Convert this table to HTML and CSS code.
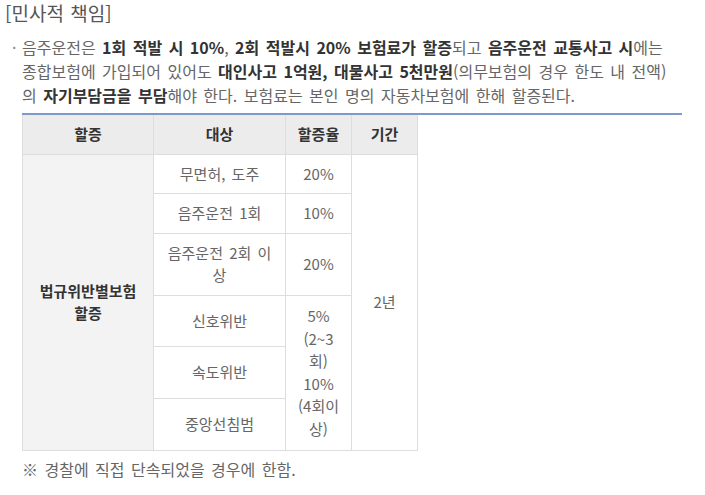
FILE: index.html
```html
<!DOCTYPE html>
<html lang="ko">
<head>
<meta charset="utf-8">
<link rel="stylesheet" href="styles.css">
</head>
<body>
<h3 class="title">[민사적 책임]</h3>
<p class="desc"><span class="dot">·</span>음주운전은 <b>1회 적발 시 10%</b>, <b>2회 적발시 20% 보험료가 할증</b>되고 <b>음주운전 교통사고 시</b>에는 종합보험에 가입되어 있어도 <b>대인사고 1억원, 대물사고 5천만원</b>(의무보험의 경우 한도 내 전액) 의 <b>자기부담금을 부담</b>해야 한다. 보험료는 본인 명의 자동차보험에 한해 할증된다.</p>
<div class="tbl-wrap">
  <table class="tbl">
    <colgroup>
      <col class="c1"><col class="c2"><col class="c3"><col class="c4">
    </colgroup>
    <thead>
      <tr><th>할증</th><th>대상</th><th>할증율</th><th>기간</th></tr>
    </thead>
    <tbody>
      <tr>
        <th class="side" rowspan="6">법규위반별보험 할증</th>
        <td>무면허, 도주</td>
        <td>20%</td>
        <td rowspan="6">2년</td>
      </tr>
      <tr><td>음주운전 1회</td><td>10%</td></tr>
      <tr><td>음주운전 2회 이상</td><td>20%</td></tr>
      <tr><td>신호위반</td><td class="rate" rowspan="3">5%<br>(2~3회)<br>10%<br>(4회이상)</td></tr>
      <tr><td>속도위반</td></tr>
      <tr><td>중앙선침범</td></tr>
    </tbody>
  </table>
</div>
<p class="note">※ 경찰에 직접 단속되었을 경우에 한함.</p>
</body>
</html>
```
FILE: styles.css
```css
* { box-sizing: border-box; }
html, body { background: #fff; }
body {
  margin: 0;
  padding: 0 0 0 5px;
  font-family: "Noto Sans CJK KR", "Noto Sans", sans-serif;
  color: #666;
  font-size: 16px;
}
.title {
  margin: 0;
  padding-top: 1px;
  font-size: 19px;
  font-weight: normal;
  line-height: 24px;
  color: #555;
  word-spacing: 1px;
}
.desc {
  margin: 10px 0 0 0;
  padding-left: 17px;
  width: 677px;
  line-height: 24px;
  word-spacing: 2px;
}
.desc b { color: #333; font-weight: bold; }
.dot {
  display: inline-block;
  width: 10px;
  margin-left: -10px;
  color: #888;
}
.tbl-wrap {
  margin: 6px 0 0 17px;
  width: 660px;
  border-top: 2px solid #7b9cc9;
}
.tbl {
  width: 395px;
  table-layout: fixed;
  border-collapse: collapse;
  font-size: 15px;
  line-height: 22.5px;
  word-spacing: 2px;
}
.c1 { width: 131px; }
.c2 { width: 132px; }
.c3 { width: 66px; }
.c4 { width: 66px; }
.tbl th, .tbl td {
  border: 1px solid #ddd;
  padding: 8px 10px;
  text-align: center;
  vertical-align: middle;
}
.tbl thead th {
  border-top: none;
  background: #ececec;
  color: #333;
  font-weight: bold;
}
.tbl th.side {
  background: #f3f3f3;
  color: #333;
  font-weight: bold;
  padding: 8px 12px;
}
.tbl td { color: #666; }
.tbl td.rate { padding: 9.5px 10px; }
.note {
  margin: 6px 0 0 17px;
  line-height: 24px;
  word-spacing: 2px;
}
```
